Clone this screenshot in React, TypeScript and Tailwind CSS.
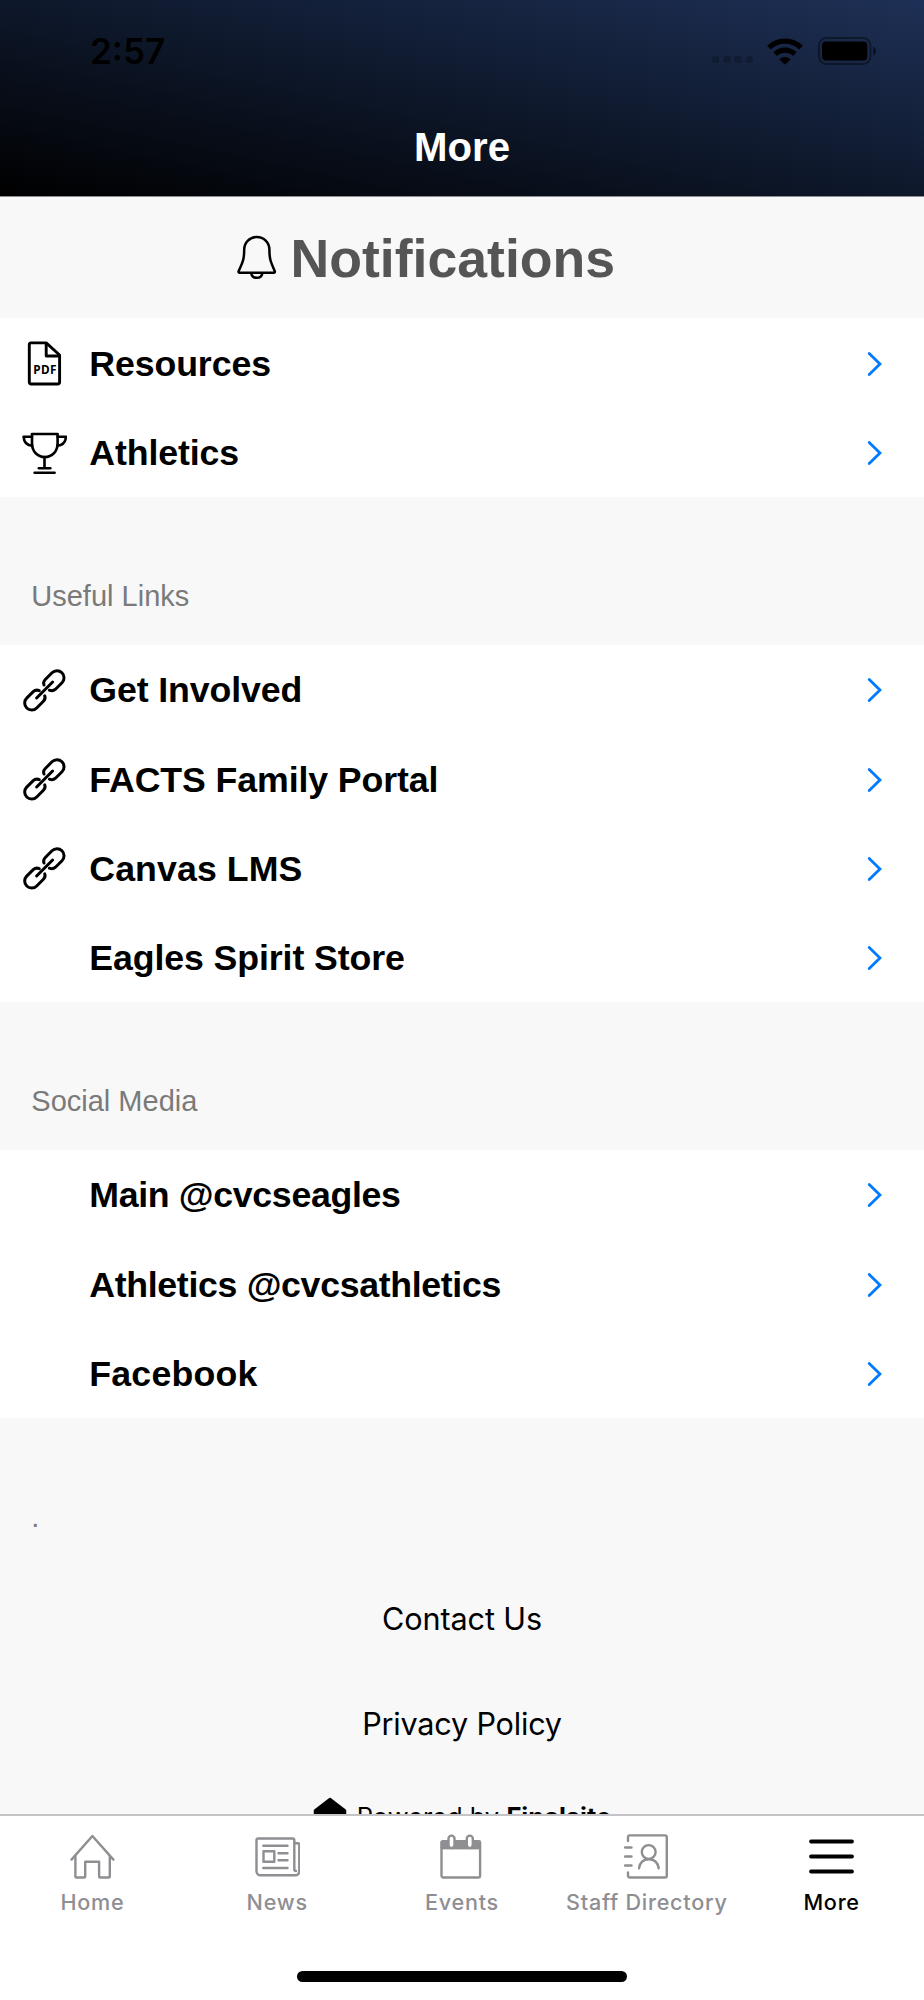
import type { ReactNode } from "react";

type Item = { label: string; icon?: ReactNode; tracking?: string };

const PdfIcon = () => (
  <svg width="45" height="45" viewBox="0 0 45 45" fill="none" stroke="currentColor" strokeWidth="2.9" strokeLinejoin="round">
    <path d="M9 1.9h15.2L37.6 14v27.3a1.7 1.7 0 0 1-1.7 1.7H9a1.7 1.7 0 0 1-1.7-1.7V3.6A1.7 1.7 0 0 1 9 1.9z" />
    <path d="M24.2 1.9V15h13.4" />
    <text x="11.2" y="33.2" fill="currentColor" stroke="none" className="font-['Noto_Sans'] text-[11.8px] font-bold tracking-[0.4px]">
      PDF
    </text>
  </svg>
);

const TrophyIcon = () => (
  <svg width="45" height="45" viewBox="0 0 45 45" fill="none" stroke="currentColor" strokeWidth="2.6" strokeLinecap="round" strokeLinejoin="round">
    <path d="M10 3h25.6v9.5C35.6 20.5 30 26 22.8 26S10 20.5 10 12.5z" />
    <path d="M10 5.8H1.6C2 11 4.6 14.4 10.2 14.6M35.6 5.8H44c-.4 5.2-3 8.6-8.600 8.800" />
    <path d="M22.5 26v11M16.8 37.2h11.6M12.6 41.7h20" />
  </svg>
);

const LinkIcon = () => (
  <svg width="45" height="45" viewBox="0 0 45 45" fill="none" stroke="currentColor" strokeWidth="3" strokeLinecap="round">
    <path d="M22 17C21 14.5 21.8 13 23.3 11.5L30 4.8A7 7 0 0 1 40 14.7L33.5 21.2C31.8 22.7 29.500 23 27.4 22.2" />
    <path d="M22.7 27.8C23.7 30.3 22.9 31.8 21.4 33.3L14.7 40A7 7 0 0 1 4.7 30.1L11.2 23.6C12.9 22.1 15.2 21.8 17.3 22.6" />
    <path d="M14.6 30L30.6 14" />
  </svg>
);

const BellIcon = () => (
  <svg width="40" height="46" viewBox="0 0 40 46" fill="none" stroke="currentColor" strokeWidth="2.5" strokeLinejoin="round">
    <path d="M7.2 14.5a12.600 12.600 0 0 1 25.2 0C32.4 24 33.5 26.5 37.8 36.3a1 1 0 0 1-.9 1.4H2.5a1 1 0 0 1-.9-1.4C6.100 26.5 7.2 24 7.2 14.5z" />
    <path d="M14.2 38.2a5.7 5.7 0 0 0 11.2 0" />
  </svg>
);

const Chevron = () => (
  <svg width="16" height="26" viewBox="0 0 16 26" fill="none" stroke="#007aff" strokeWidth="2.8" strokeLinecap="round">
    <path d="M2.2 2.4L13 13 2.2 23.6" />
  </svg>
);

const HomeIcon = () => (
  <>
    <path d="M1.5 25.6L22.4 2l21 23.6" />
    <path d="M5.4 22.5v19.7a1.3 1.3 0 0 0 1.3 1.3h7.2a1.3 1.3 0 0 0 1.3-1.3V27.8h13.9v14.4a1.3 1.3 0 0 0 1.3 1.3h8.1a1.3 1.3 0 0 0 1.3-1.3V22.5" />
  </>
);

const NewsIcon = () => (
  <>
    <path d="M39.3 9.2h3.500a1.5 1.5 0 0 1 1.5 1.5v26.4a4 4 0 0 1-4 4.2H5.5a4 4 0 0 1-4-4V6a1.5 1.5 0 0 1 1.5-1.5h34.8A1.5 1.5 0 0 1 39.3 6v29c0 1.5.5 2 1.7 2" />
    <path d="M8.3 11.8h24.2M8.3 34h24.2M23.5 19.2h9M23.5 26.2h9" />
    <path d="M8.5 17.2h10.8v10.6H8.5z" />
  </>
);

const EventsIcon = () => (
  <>
    <path d="M3.5 7.2h36.4a1.2 1.2 0 0 1 1.2 1.2v33.4a1.7 1.7 0 0 1-1.7 1.7H4.2a1.7 1.7 0 0 1-1.7-1.7V8.4a1.2 1.2 0 0 1 1-1.2z" />
    <path d="M2.5 7.5h38.4v7.4H2.5z" fill="currentColor" strokeWidth="1" />
    <rect x="9.500" y="1.600" width="6" height="12.500" rx="3" fill="#fff" />
    <rect x="27.800" y="1.600" width="6" height="12.500" rx="3" fill="#fff" />
  </>
);

const StaffIcon = () => (
  <>
    <path d="M4 7V3.2a1.8 1.8 0 0 1 1.8-1.8H41a1.8 1.8 0 0 1 1.8 1.8v38.5a1.8 1.8 0 0 1-1.8 1.8H5.8A1.8 1.8 0 0 1 4 41.7V38.5" />
    <path d="M1 13.5h6.5M1 22.5h6.5M1 31.5h6.5" />
    <circle cx="24.700" cy="18" r="6.900" />
    <path d="M15 34.2C16 28.5 19.8 25.3 24.8 25.3S33.7 28.5 34.7 34.2" />
  </>
);

const MoreIcon = () => <path d="M2 7.5h41M2 22.5h41M2 37.5h41" strokeWidth="3.8" />;

const tabs = [
  { label: "Home", Icon: HomeIcon },
  { label: "News", Icon: NewsIcon },
  { label: "Events", Icon: EventsIcon },
  { label: "Staff Directory", Icon: StaffIcon },
  { label: "More", Icon: MoreIcon, active: true },
];

const mainItems: Item[] = [
  { label: "Resources", icon: <PdfIcon /> },
  { label: "Athletics", icon: <TrophyIcon /> },
];

const usefulLinks: Item[] = [
  { label: "Get Involved", icon: <LinkIcon /> },
  { label: "FACTS Family Portal", icon: <LinkIcon /> },
  { label: "Canvas LMS", icon: <LinkIcon />, tracking: "tracking-[0.1px]" },
  { label: "Eagles Spirit Store" },
];

const socialMedia: Item[] = [
  { label: "Main @cvcseagles", tracking: "tracking-[-0.33px]" },
  { label: "Athletics @cvcsathletics", tracking: "tracking-[-0.33px]" },
  { label: "Facebook", tracking: "tracking-[0.2px]" },
];

function List({ items }: { items: Item[] }) {
  return (
    <ul className="shrink-0 bg-white">
      {items.map((item) => (
        <li key={item.label} className="flex h-[89.33px] items-center pt-[1.4px] pr-[41px] pl-[22.3px]">
          <span className="w-[67px] shrink-0">{item.icon}</span>
          <span className={`flex-1 text-[35.7px] leading-[40px] font-bold ${item.tracking ?? "tracking-[-0.1px]"}`}>
            {item.label}
          </span>
          <Chevron />
        </li>
      ))}
    </ul>
  );
}

function SectionTitle({ children }: { children: ReactNode }) {
  return (
    <h2 className="flex h-[147.8px] shrink-0 items-end pb-[32px] pl-[31.3px] text-[29px] leading-[34px] text-[#7a7a7a]">
      {children}
    </h2>
  );
}

function StatusBar() {
  return (
    <div className="flex h-[102px] items-center justify-between pr-[47px] pl-[90px]">
      <span className="font-['Inter'] text-[35px] leading-[40px] font-semibold">2:57</span>
      <div className="flex items-center">
        <div className="mt-[17px] mr-[14px] flex gap-[3.7px]">
          {[0, 1, 2, 3].map((n) => (
            <span key={n} className="size-[7.5px] rounded-[2.5px] bg-black/20" />
          ))}
        </div>
        <svg width="36" height="27" viewBox="0 0 36 27" fill="none" stroke="#000" strokeWidth="5.2">
          <path d="M2 9.7a22.8 22.8 0 0 1 32 0" />
          <path d="M8.2 16.2a14 14 0 0 1 19.6 0" />
          <path d="M12.3 21.3a8.2 8.2 0 0 1 11.4 0L18 26.8z" fill="#000" stroke="none" />
        </svg>
        <svg className="ml-[15px]" width="59" height="28" viewBox="0 0 59 28">
          <rect x="1" y="1" width="51.5" height="26" rx="7.5" fill="none" stroke="#000" strokeOpacity="0.4" strokeWidth="2" />
          <rect x="4" y="4.5" width="45.3" height="19" rx="4" />
          <path d="M55 9.5c4.2 1.5 4.2 7.5 0 9z" fillOpacity="0.5" />
        </svg>
      </div>
    </div>
  );
}

export default function App() {
  return (
    <div className="flex h-[2000px] w-[924px] flex-col overflow-hidden bg-[#f8f8f8] font-['Liberation_Sans',Arial,sans-serif] text-black">
      <header className="h-[197px] shrink-0 border-b border-[#8d8d96] bg-[linear-gradient(to_top_right,#000_0%,#0e182b_50%,#1e3056_100%)]">
        <StatusBar />
        <h1 className="mt-[21px] text-center text-[40.2px] leading-[50px] font-bold text-white">More</h1>
      </header>

      <main className="flex min-h-0 flex-1 flex-col overflow-hidden">
        <div className="flex h-[121.4px] shrink-0 items-center pl-[237px]">
          <BellIcon />
          <span className="mt-[1px] ml-[13.5px] text-[53.6px] leading-[60px] font-bold text-[#555]">Notifications</span>
        </div>
        <List items={mainItems} />
        <SectionTitle>Useful Links</SectionTitle>
        <List items={usefulLinks} />
        <SectionTitle>Social Media</SectionTitle>
        <List items={socialMedia} />
        <SectionTitle>.</SectionTitle>

        <footer className="flex flex-col items-center font-['Inter'] text-[30.6px] leading-[36px]">
          <a className="flex h-[105px] items-center pt-[2px] tracking-[-0.1px]">Contact Us</a>
          <a className="flex h-[105px] items-center pt-[2px] tracking-[-0.2px]">Privacy Policy</a>
          <div className="mt-[21.5px] flex items-start">
            <svg width="34" height="34" viewBox="0 0 34 34" strokeLinejoin="round">
              <path d="M17 2L32 13.5v4L17 31 2 17.5v-4z" stroke="#000" strokeWidth="2.5" />
            </svg>
            <span className="mt-[4px] ml-[10px] text-[25.5px] leading-[32px]">
              Powered by <b className="font-bold">Finalsite</b>
            </span>
          </div>
        </footer>
      </main>

      <nav className="flex h-[186px] shrink-0 flex-col border-t-2 border-[#c4c4c6] bg-white">
        <div className="flex pt-[18px]">
          {tabs.map(({ label, Icon, active }) => (
            <a key={label} className={`flex flex-1 basis-0 flex-col items-center ${active ? "text-black" : "text-[#8e8e93]"}`}>
              <svg width="45" height="45" viewBox="0 0 45 45" fill="none" stroke="currentColor" strokeWidth="2.4" strokeLinecap="round" strokeLinejoin="round">
                <Icon />
              </svg>
              <span className="mt-[9px] font-['Inter'] text-[21.6px] leading-[28px] font-medium tracking-[0.75px] whitespace-nowrap">
                {label}
              </span>
            </a>
          ))}
        </div>
        <div className="mt-auto mb-[18px] h-[11px] w-[330px] self-center rounded-full bg-black" />
      </nav>
    </div>
  );
}
